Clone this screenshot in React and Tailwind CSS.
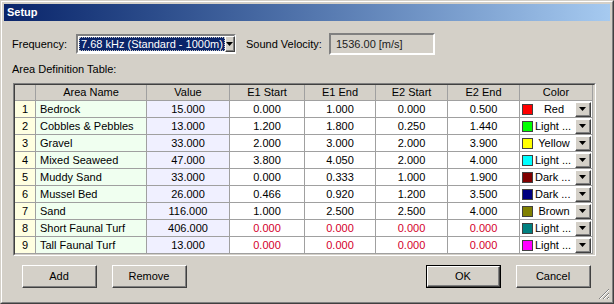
import React from "react";

const ROWS = [
    ["Bedrock", "15.000", "0.000", "1.000", "0.000", "0.500", "Red", "bg-[#ff0000]", false],
    ["Cobbles & Pebbles", "13.000", "1.200", "1.800", "0.250", "1.440", "Light ...", "bg-[#00ff00]", false],
    ["Gravel", "33.000", "2.000", "3.000", "2.000", "3.900", "Yellow", "bg-[#ffff00]", false],
    ["Mixed Seaweed", "47.000", "3.800", "4.050", "2.000", "4.000", "Light ...", "bg-[#00ffff]", false],
    ["Muddy Sand", "33.000", "0.000", "0.333", "1.000", "1.900", "Dark ...", "bg-[#800000]", false],
    ["Mussel Bed", "26.000", "0.466", "0.920", "1.200", "3.500", "Dark ...", "bg-[#000080]", false],
    ["Sand", "116.000", "1.000", "2.500", "2.500", "4.000", "Brown", "bg-[#808000]", false],
    ["Short Faunal Turf", "406.000", "0.000", "0.000", "0.000", "0.000", "Light ...", "bg-[#008080]", true],
    ["Tall Faunal Turf", "13.000", "0.000", "0.000", "0.000", "0.000", "Light ...", "bg-[#ff00ff]", true],
];

// column widths, left to right
const W = {
    num: "w-[21px]",
    name: "w-[111px]",
    value: "w-[83px]",
    e1s: "w-[75px]",
    e1e: "w-[71px]",
    e2s: "w-[72px]",
    e2e: "w-[72px]",
    color: "w-[73px]",
};

function Arrow() {
    return (
        <svg width="7" height="4" viewBox="0 0 7 4">
            <path d="M0 0h7L3.5 4z" fill="#000" />
        </svg>
    );
}

function DropButton({ className = "" }) {
    return (
        <div className={`border border-t-white border-l-white border-b-[#404040] border-r-[#404040] bg-[#d4d0c8] ${className}`}>
            <div className="flex justify-center items-center border-r border-b border-[#808080] w-full h-full">
                <Arrow />
            </div>
        </div>
    );
}

function Button({ label, isDefault }) {
    const inner = (
        <div className="border border-t-white border-l-white border-b-[#404040] border-r-[#404040] w-full h-full">
            <div className="flex justify-center items-center border-r border-b border-[#808080] w-full h-full">
                {label}
            </div>
        </div>
    );
    return (
        <div className={`w-[75px] h-[23px] bg-[#d4d0c8] ${isDefault ? "border border-black" : ""}`}>
            {inner}
        </div>
    );
}

function HeaderCell({ w, children }) {
    return (
        <div className={`${w} h-[16px] flex justify-center items-center border-r border-b border-[#a0a0a0] bg-[#d4d0c8] leading-none`}>
            {children}
        </div>
    );
}

function Cell({ w, bg = "bg-white", red, left, children }) {
    return (
        <div
            className={`${w} h-[17px] flex items-center border-r border-b border-[#a0a0a0] ${bg} ${left ? "pl-[4px]" : "justify-center"} ${red ? "text-[#d4002a]" : ""} leading-none whitespace-nowrap`}
        >
            {children}
        </div>
    );
}

export default function App() {
    return (
        <div className="w-[614px] h-[304px] font-['Liberation_Sans',Arial,sans-serif] text-[11px] text-black">
            <div className="border border-t-[#d4d0c8] border-l-[#d4d0c8] border-b-[#404040] border-r-[#404040] w-full h-full">
                <div className="flex flex-col bg-[#d4d0c8] p-[2px] border border-t-white border-l-white border-b-[#808080] border-r-[#808080] w-full h-full">
                    {/* TITLE BAR */}
                    <div className="flex items-center bg-gradient-to-r from-[#0a246a] to-[#a6caf0] pl-[3px] h-[18px] font-bold text-white">
                        Setup
                    </div>

                    {/* FREQUENCY ROW */}
                    <div className="flex items-center mt-[12px] pl-[8px] h-[22px]">
                        <div className="w-[64px]">Frequency:</div>
                        <div className="flex items-center bg-white p-[1px] border-2 border-t-[#808080] border-l-[#808080] border-b-white border-r-white w-[160px] h-[20px]">
                            <div className="flex flex-1 items-center bg-[#0a246a] px-[1px] border border-[#c0c0c0] border-dotted h-full text-white leading-none whitespace-nowrap">
                                7.68 kHz (Standard - 1000m)
                            </div>
                            <DropButton className="w-[16px] h-[16px]" />
                        </div>
                        <div className="ml-[10px] w-[83px]">Sound Velocity:</div>
                        <div className="flex items-center pl-[5px] border-2 border-t-[#808080] border-l-[#808080] border-b-white border-r-white w-[106px] h-[22px] text-[#202020]">
                            1536.00 [m/s]
                        </div>
                    </div>

                    <div className="mt-[6px] pl-[8px] h-[16px] leading-[16px]">Area Definition Table:</div>

                    {/* TABLE */}
                    <div className="mt-[6px] ml-[9px] border border-t-[#808080] border-l-[#808080] border-b-white border-r-white w-[583px] h-[173px]">
                        <div className="bg-[#d4d0c8] border border-t-[#404040] border-l-[#404040] border-b-[#d4d0c8] border-r-[#d4d0c8] w-full h-full">
                            <div className="flex">
                                <HeaderCell w={W.num}></HeaderCell>
                                <HeaderCell w={W.name}>Area Name</HeaderCell>
                                <HeaderCell w={W.value}>Value</HeaderCell>
                                <HeaderCell w={W.e1s}>E1 Start</HeaderCell>
                                <HeaderCell w={W.e1e}>E1 End</HeaderCell>
                                <HeaderCell w={W.e2s}>E2 Start</HeaderCell>
                                <HeaderCell w={W.e2e}>E2 End</HeaderCell>
                                <HeaderCell w={W.color}>Color</HeaderCell>
                            </div>
                            {ROWS.map((r, i) => (
                                <div key={i} className="flex">
                                    <Cell w={W.num} bg="bg-[#ffffe1]">{i + 1}</Cell>
                                    <Cell w={W.name} bg="bg-[#f0fff0]" left>{r[0]}</Cell>
                                    <Cell w={W.value} bg="bg-[#f0f0ff]">{r[1]}</Cell>
                                    <Cell w={W.e1s} red={r[8]}>{r[2]}</Cell>
                                    <Cell w={W.e1e} red={r[8]}>{r[3]}</Cell>
                                    <Cell w={W.e2s} red={r[8]}>{r[4]}</Cell>
                                    <Cell w={W.e2e} red={r[8]}>{r[5]}</Cell>
                                    <div className={`${W.color} h-[17px] flex items-center border-r border-b border-[#a0a0a0] bg-white pl-[2px] pr-[1px]`}>
                                        <div className={`w-[11px] h-[11px] border border-[#404040] ${r[7]}`}></div>
                                        <div className={`flex-1 leading-none whitespace-nowrap ${r[6].includes("...") ? "pl-[2px]" : "text-center"}`}>
                                            {r[6]}
                                        </div>
                                        <DropButton className="w-[16px] h-[15px]" />
                                    </div>
                                </div>
                            ))}
                        </div>
                    </div>

                    {/* BUTTONS */}
                    <div className="flex items-center mt-[9px] pl-[18px]">
                        <Button label="Add" />
                        <div className="w-[15px]" />
                        <Button label="Remove" />
                        <div className="flex-1" />
                        <Button label="OK" isDefault />
                        <div className="w-[15px]" />
                        <Button label="Cancel" />
                        <div className="w-[19px]" />
                    </div>

                    <div className="flex flex-1 justify-end items-end">
                        <svg width="12" height="12" viewBox="0 0 12 12">
                            <path d="M11 1L1 11M11 5L5 11M11 9L9 11" stroke="#808080" strokeWidth="1" />
                            <path d="M11 2L2 11M11 6L6 11M11 10L10 11" stroke="#fff" strokeWidth="1" />
                        </svg>
                    </div>
                </div>
            </div>
        </div>
    );
}
